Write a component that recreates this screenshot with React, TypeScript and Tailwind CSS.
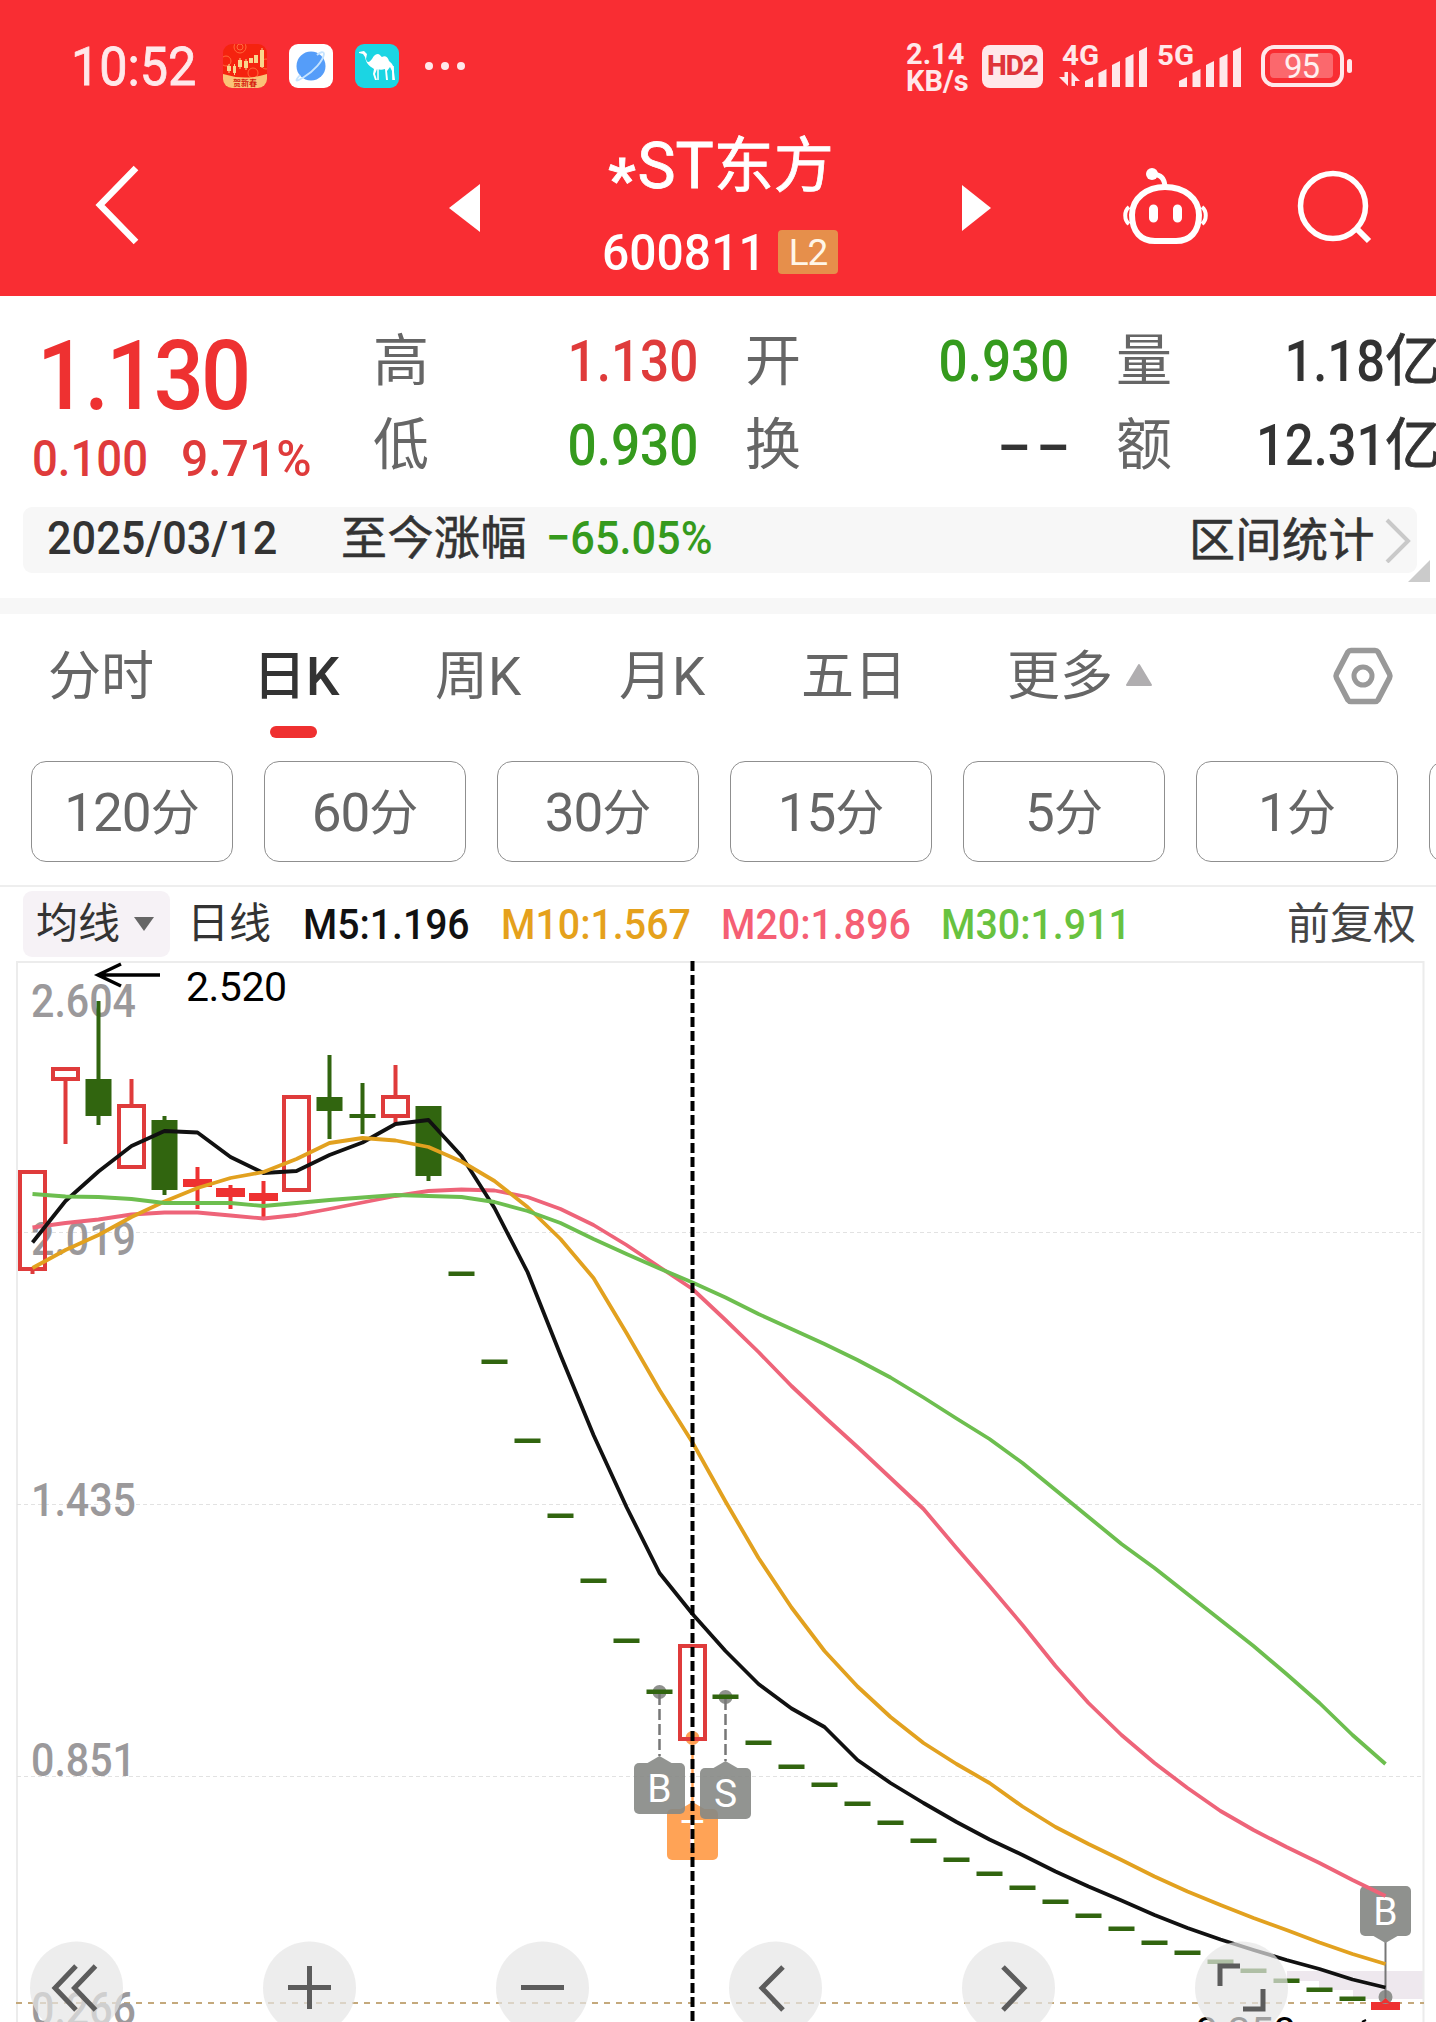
import type { ReactNode } from 'react';

type Candle = {
  kind: 'hollow' | 'red' | 'green';
  top: number;
  bottom: number;
  high?: number;
  low?: number;
};

const STEP = 33;
const FIRST_X = 32.5;
const cx = (i: number) => FIRST_X + i * STEP;

const CANDLES: Candle[] = [
  { kind: 'hollow', top: 1170, bottom: 1271, low: 1274 },
  { kind: 'hollow', top: 1067, bottom: 1081, low: 1144 },
  { kind: 'green', top: 1079, bottom: 1116, high: 1001, low: 1125 },
  { kind: 'hollow', top: 1104, bottom: 1169, high: 1079 },
  { kind: 'green', top: 1120, bottom: 1190, high: 1116, low: 1195 },
  { kind: 'red', top: 1179, bottom: 1187, high: 1167, low: 1209 },
  { kind: 'red', top: 1188, bottom: 1197, high: 1185, low: 1209 },
  { kind: 'red', top: 1193, bottom: 1201, high: 1181, low: 1217 },
  { kind: 'hollow', top: 1095, bottom: 1192 },
  { kind: 'green', top: 1097, bottom: 1111, high: 1055, low: 1139 },
  { kind: 'green', top: 1114, bottom: 1118, high: 1083, low: 1134 },
  { kind: 'hollow', top: 1095, bottom: 1118, high: 1065, low: 1123 },
  { kind: 'green', top: 1106, bottom: 1176, low: 1181 },
  ...[1274, 1362, 1441, 1516, 1581, 1641, 1692].map(flat),
  { kind: 'hollow', top: 1644, bottom: 1741 },
  ...[
    1697, 1743, 1767, 1785, 1804, 1823, 1841, 1860, 1874, 1888, 1902, 1916, 1929, 1943, 1953, 1962,
    1971, 1981, 1990, 1999,
  ].map(flat),
  { kind: 'red', top: 2002, bottom: 2010, high: 1999 },
];

// limit-down day: open, high, low and close are all the same
function flat(y: number): Candle {
  return { kind: 'green', top: y - 2.5, bottom: y + 2 };
}

const AVERAGES = [
  {
    color: '#ee6479',
    values: [
      1227.5, 1223, 1219.5, 1214.5, 1212.5, 1212.5, 1215.5, 1218.5, 1215, 1209, 1202.5, 1196, 1191,
      1189.5, 1190.5, 1197, 1209, 1225, 1245, 1267, 1289, 1320, 1352, 1386, 1417, 1447, 1478, 1509,
      1548, 1586, 1625, 1666, 1703, 1735, 1763, 1788, 1811, 1830, 1847, 1863, 1880, 1896,
    ],
  },
  {
    color: '#111111',
    values: [
      1242.5, 1201, 1171.5, 1146, 1131, 1132.5, 1157, 1173, 1171, 1155, 1142.5, 1124, 1120, 1156,
      1208, 1272, 1355, 1435, 1507, 1573, 1614, 1651, 1684, 1708.5, 1727, 1760, 1783, 1803, 1822,
      1839.5, 1855, 1871.5, 1886.5, 1900.5, 1915, 1928, 1939.5, 1950, 1960, 1969, 1979.5, 1987.5,
    ],
  },
  {
    color: '#e2a11f',
    values: [
      1268, 1250, 1235, 1217, 1201.5, 1188, 1178, 1172, 1159, 1143, 1138, 1140.5, 1147, 1161.5,
      1181, 1207, 1239, 1278, 1333, 1390, 1442.5, 1501.5, 1558, 1607.5, 1651, 1686.5, 1717, 1743,
      1764, 1783, 1806.5, 1827, 1844, 1860, 1876.5, 1891.5, 1905, 1918, 1930, 1942.5, 1954, 1964,
    ],
  },
  {
    color: '#6dbe4f',
    values: [
      1194, 1196.5, 1197, 1199, 1203, 1203, 1203, 1206, 1203, 1200, 1197.5, 1195, 1196, 1197, 1202,
      1211, 1223, 1239, 1254, 1268.5, 1282.5, 1297.5, 1314, 1329, 1344, 1360, 1377.5, 1397.5, 1418.5,
      1439, 1463, 1490, 1517, 1544, 1568, 1594, 1620, 1646, 1674, 1703, 1735, 1764,
    ],
  },
];

const TABS = [
  { label: '分时', width: 'w-[205px]' },
  { label: '日K', width: 'w-[182px]', active: true },
  { label: '周K', width: 'w-[184px]' },
  { label: '月K', width: 'w-[182px]' },
  { label: '五日', width: 'w-[206px]' },
];

const PERIODS = ['120', '60', '30', '15', '5', '1', ''];

function StatusBar() {
  return (
    <div className="flex h-[132px] items-center pl-[71px] text-[#ffe8ea]">
      <span className="mt-[3px] w-[152px] origin-left scale-x-[0.95] text-[53px] leading-none [-webkit-text-stroke:0.8px]">
        10:52
      </span>
      <svg width="180" height="44" viewBox="0 0 180 44" className="mr-[22px]">
        <clipPath id="app">
          <rect width="44" height="44" rx="9" />
        </clipPath>
        <g clipPath="url(#app)">
          <rect width="44" height="44" fill="#f5230f" />
          <g fill="none" stroke="#ff6a3c" strokeWidth="1">
            <circle cx="17" cy="3" r="6" />
            <circle cx="17" cy="3" r="3" />
            <circle cx="3" cy="17" r="5" />
            <circle cx="30" cy="29" r="5" />
            <circle cx="43" cy="20" r="5" />
          </g>
          <path d="M0 30Q22 37 44 30V44H0Z" fill="#fbc277" />
          <g fill="#f9d58c">
            <path d="M4 22h4v5H4zM10 22h3v7h-3zM15 16h4v7h-4zM21 17h4v7h-4zM26 14h4v5h-4zM31 11h4v8h-4zM37 6h4v17h-4z" />
            <path d="M6 20v9M11.500 20v11M17 14v11M23 15v11M39 4v20" stroke="#f9d58c" />
          </g>
          <text x="22" y="42" fontSize="8" fontWeight="700" textAnchor="middle" fill="#d51c10">
            贺新春
          </text>
        </g>
        <rect x="66" width="44" height="44" rx="9" fill="#fff" />
        <circle cx="88" cy="22" r="14.500" fill="#559df9" />
        <path
          d="M77 31C71 38 73 38 81 33C91 27 100 17 101 10C101 7 97 8 94 11"
          fill="none"
          stroke="#c5e3ff"
          strokeWidth="1.800"
        />
        <rect x="132" width="44" height="44" rx="9" fill="#1bd5e3" />
        <path
          d="M136 8l5-1 3 3-1 5c1 4 3 4 6 0 2-4 4-5 6-5 2 0 3 3 4 3 3-2 6 0 7 4 4 3 5 6 5 11l1 8h-2l-1-9-2-4-3 4 1 9h-2l-1-11c-3 1-5 1-8 0l-2 5 2 6h-2l-2-6 1-5c-5-3-8-6-9-12l-2-3-4-1z"
          fill="#fff"
        />
        <path d="M155 23v13M170 22v14" stroke="#fff" strokeWidth="1.500" />
      </svg>
      <div className="flex gap-[8px]">
        <i className="size-[8px] rounded-full bg-[#ffe8ea]" />
        <i className="size-[8px] rounded-full bg-[#ffe8ea]" />
        <i className="size-[8px] rounded-full bg-[#ffe8ea]" />
      </div>
      <div className="ml-[441px] w-[76px] pt-[4px] text-[29px] leading-[27px] font-bold">
        <div>2.14</div>
        <div>KB/s</div>
      </div>
      <div className="flex h-[43px] w-[61px] items-center justify-center rounded-[8px] bg-[#ffe8ea] text-[28px] font-extrabold tracking-[-1px] text-[#e0343a]">
        HD2
      </div>
      <Signal label="4G" arrows />
      <Signal label="5G" />
      <svg width="96" height="42" viewBox="0 0 96 42" className="ml-[19px]">
        <rect x="2" y="2" width="79" height="38" rx="11" fill="none" stroke="#ffe8ea" strokeWidth="4" />
        <rect x="9" y="8" width="63" height="25" rx="4" fill="#fb686d" />
        <rect x="86" y="14" width="5" height="14" rx="2.500" fill="#ffe8ea" />
        <text x="41" y="33" fontSize="33" textAnchor="middle" textLength="36" fill="#fff0f0">
          95
        </text>
      </svg>
    </div>
  );
}

function Signal({ label, arrows }: { label: string; arrows?: boolean }) {
  return (
    <svg
      width={arrows ? 91 : 85}
      height="44"
      viewBox={arrows ? '0 0 91 44' : '0 0 85 44'}
      className={`overflow-visible ${arrows ? 'ml-[17px]' : 'ml-[6px]'}`}
      fill="#ffe8ea"
    >
      <text x={arrows ? 2 : 0} y="21" fontSize="28" fontWeight="700" textLength="37" lengthAdjust="spacingAndGlyphs">
        {label}
      </text>
      <g transform={arrows ? 'translate(25 0)' : 'translate(22 0)'}>
        {[33, 25, 17, 10, 3].map((y, i) => (
          <path key={y} d={`M${i * 13.5} ${y + 4}L${i * 13.5 + 8} ${y}V43H${i * 13.5}Z`} />
        ))}
      </g>
      {arrows && (
        <>
          <path d="M4.500 28H8V42L-1 33H4.500Z" />
          <path d="M11.500 42H15V37L20 37L11.500 28Z" />
        </>
      )}
    </svg>
  );
}

function TitleBar() {
  return (
    <div className="flex h-[164px] pl-[92px] text-white">
      <svg width="50" height="84" viewBox="0 0 50 84" className="mt-[31px]">
        <path d="M44 5L8 42L44 79" fill="none" stroke="#fff" strokeWidth="6.500" />
      </svg>
      <svg width="31" height="48" viewBox="0 0 31 48" className="mt-[52px] ml-[307px]">
        <path d="M0 24L31 0V48Z" fill="#fff" />
      </svg>
      <div className="ml-[81px] w-[320px] text-center">
        <div className="mt-[4px] flex h-[62px] items-center justify-center text-[60px] leading-none [-webkit-text-stroke:0.8px]">
          <span className="text-[64px]">
            <span className="relative top-[12px] mr-[2px] text-[60px] font-bold">*</span>ST
          </span>
          <span>东方</span>
        </div>
        <div className="mt-[32px] ml-[41px] flex h-[44px] items-center">
          <span className="mt-[2px] w-[176px] origin-left scale-x-[0.96] text-left text-[50px] leading-none font-medium">
            600811
          </span>
          <span className="flex h-[44px] w-[60px] items-center justify-center rounded-[4px] bg-[#e68f4b] text-[37px] leading-none tracking-[-1px] text-[#fff6e8]">
            L2
          </span>
        </div>
      </div>
      <svg width="29" height="46" viewBox="0 0 29 46" className="mt-[53px] ml-[81px]">
        <path d="M0 0L29 23L0 46Z" fill="#fff" />
      </svg>
      <svg width="88" height="80" viewBox="0 0 88 80" className="mt-[35px] ml-[129px]" fill="none" stroke="#fff">
        <circle cx="32" cy="7" r="6" fill="#fff" stroke="none" />
        <path d="M33 7C41 8 44 11 45 19" strokeWidth="5" />
        <path d="M45 20C64 20 79 31 79 48C79 65 70 74 56 74H35C21 74 12 65 12 48C12 31 27 20 45 20Z" strokeWidth="6" />
        <path d="M9 40C4 44 4 53 9 57M82 40C87 44 87 53 82 57" strokeWidth="4" />
        <path d="M33.500 42V51M57.500 42V51" strokeWidth="9" strokeLinecap="round" />
      </svg>
      <svg width="80" height="80" viewBox="0 0 80 80" className="mt-[38px] ml-[87px]" fill="none" stroke="#fff">
        <circle cx="38" cy="36" r="32.500" strokeWidth="5.500" />
        <path d="M61 58L74 71" strokeWidth="6" />
      </svg>
    </div>
  );
}

function Stat({ label, children, className }: { label: string; children: ReactNode; className: string }) {
  return (
    <div className={`flex h-[84px] items-center justify-between text-[57px] leading-none font-medium ${className}`}>
      <span className="text-[56px] font-normal text-[#666]">{label}</span>
      {children}
    </div>
  );
}

function Quote() {
  return (
    <div className="flex h-[211px] pt-[23px]">
      <div className="w-[373px] shrink-0 font-medium text-[#ee3131]">
        <div className="mt-[8px] ml-[37px] origin-left scale-x-[0.91] text-[97px] leading-[98px] tracking-[-3px]">1.130</div>
        <div className="mt-[8px] ml-[32px] flex text-[50px] leading-[52px] text-[#df3b3b]">
          <span className="w-[149px] origin-left scale-x-[0.91]">0.100</span>
          <span className="w-[150px] origin-left scale-x-[0.96]">9.71%</span>
        </div>
      </div>
      <div className="w-[325px] shrink-0">
        <Stat label="高" className="text-[#df3b3b]">
          <span className="origin-right scale-x-[0.9]">1.130</span>
        </Stat>
        <Stat label="低" className="text-[#359a1d]">
          <span className="origin-right scale-x-[0.9]">0.930</span>
        </Stat>
      </div>
      <div className="ml-[47px] w-[324px] shrink-0">
        <Stat label="开" className="text-[#359a1d]">
          <span className="origin-right scale-x-[0.9]">0.930</span>
        </Stat>
        <Stat label="换" className="text-[#333]">
          <span className="-mr-[7px] origin-right scale-x-[1.750] tracking-[3px]">--</span>
        </Stat>
      </div>
      <div className="ml-[47px] w-[325px] shrink-0">
        <Stat label="量" className="text-[#333]">
          <span className="flex">
            <span className="origin-right scale-x-[0.89]">1.18</span>
            <span className="text-[56px] font-normal [-webkit-text-stroke:0.8px]">亿</span>
          </span>
        </Stat>
        <Stat label="额" className="text-[#333]">
          <span className="flex">
            <span className="origin-right scale-x-[0.89]">12.31</span>
            <span className="text-[56px] font-normal [-webkit-text-stroke:0.8px]">亿</span>
          </span>
        </Stat>
      </div>
    </div>
  );
}

function RangeBar() {
  return (
    <div className="relative flex h-[107px] border-b-[16px] border-[#f7f7f7] px-[23px]">
      <div className="flex h-[66px] w-[1394px] shrink-0 items-center rounded-[9px] bg-[#f7f7f7] pl-[24px] text-[46px] leading-none font-medium text-[#333]">
        <span className="-mt-[5px] w-[294px] origin-left scale-x-[0.92] text-[47px]">2025/03/12</span>
        <span className="-mt-[5px] w-[205px] font-normal tracking-[0.500px] [-webkit-text-stroke:0.6px]">至今涨幅</span>
        <span className="-mt-[5px] origin-left scale-x-[0.92] text-[47px] text-[#359a1d]">−65.05%</span>
        <span className="ml-auto font-normal tracking-[0.500px] [-webkit-text-stroke:0.6px]">区间统计</span>
        <svg width="46" height="46" viewBox="0 0 46 46" className="-ml-[4px]">
          <path d="M16 3L37 24L16 45" fill="none" stroke="#c9c9c9" strokeWidth="4" />
        </svg>
      </div>
      <svg width="22" height="22" viewBox="0 0 22 22" className="absolute top-[53px] left-[1408px]">
        <path d="M22 0V22H0Z" fill="#cbcbcb" />
      </svg>
    </div>
  );
}

function Tabs() {
  return (
    <div className="flex h-[147px] pl-[48px] text-[53px] leading-none text-[#666]">
      {TABS.map((tab) => (
        <div key={tab.label} className={`shrink-0 pt-[37px] ${tab.width}`}>
          <span className={tab.active ? 'font-medium text-[#333]' : ''}>{tab.label}</span>
          {tab.active && <div className="mt-[22px] ml-[17px] h-[12px] w-[47px] rounded-[6px] bg-[#ef3030]" />}
        </div>
      ))}
      <div className="flex w-[325px] shrink-0 pt-[37px]">
        更多
        <svg width="28" height="24" viewBox="0 0 28 24" className="mt-[12px] ml-[12px]">
          <path d="M14 2L26 22H2Z" fill="#b0aeb0" stroke="#b0aeb0" strokeWidth="2" strokeLinejoin="round" />
        </svg>
      </div>
      <svg width="62" height="60" viewBox="0 0 62 60" className="mt-[32px] shrink-0" fill="none" stroke="#999">
        <path d="M19 4.500H43Q45 4.500 46 6L57.500 28Q58.500 30 57.500 32L46 54Q45 55.500 43 55.500H19Q17 55.500 16 54L4.500 32Q3.500 30 4.500 28L16 6Q17 4.500 19 4.500Z" strokeWidth="5.500" />
        <circle cx="31" cy="30" r="9" strokeWidth="5" />
      </svg>
    </div>
  );
}

function Periods() {
  return (
    <div className="flex h-[126px] gap-[31px] overflow-hidden border-b-2 border-[#eee] pl-[31px]">
      {PERIODS.map((p) => (
        <div
          key={p}
          className="flex h-[101px] w-[202px] shrink-0 items-center justify-center rounded-[15px] border-[1.500px] border-[#8f8f8f] pt-[3px] text-[53px] leading-none text-[#666]"
        >
          {p && (
            <>
              <span className="tracking-[-1px]">{p}</span>
              <span className="text-[49px]">分</span>
            </>
          )}
        </div>
      ))}
    </div>
  );
}

function Legend() {
  return (
    <div className="flex h-[74px] items-center pl-[23px] text-[43px] leading-none font-medium text-[#333]">
      <div className="flex h-[66px] w-[147px] items-center rounded-[9px] bg-[#f6f2f6] pl-[13px] font-normal">
        <span className="text-[42px]">均线</span>
        <svg width="24" height="16" viewBox="0 0 24 16" className="ml-[12px]">
          <path d="M2 1H22L12 15Z" fill="#666" />
        </svg>
      </div>
      <span className="ml-[17px] w-[116px] text-[42px] font-normal">日线</span>
      <span className="w-[198px] origin-left scale-x-[0.91] text-[#111]">M5:1.196</span>
      <span className="w-[220px] origin-left scale-x-[0.915] text-[#e5a11c]">M10:1.567</span>
      <span className="w-[220px] origin-left scale-x-[0.915] text-[#f55f74]">M20:1.896</span>
      <span className="origin-left scale-x-[0.915] text-[#68c23f]">M30:1.911</span>
      <span className="mr-[20px] ml-auto text-[43px] font-normal text-[#444]">前复权</span>
    </div>
  );
}

function CandleShape({ candle, x }: { candle: Candle; x: number }) {
  const { kind, top, bottom, high, low } = candle;
  const color = kind === 'green' ? '#31650f' : kind === 'red' ? '#ee3131' : '#df3b3b';
  return (
    <g>
      {high && <rect x={x - 2} y={high} width="4" height={top - high} fill={color} />}
      {low && <rect x={x - 2} y={bottom} width="4" height={low - bottom} fill={color} />}
      {kind === 'hollow' ? (
        <rect x={x - 12.5} y={top + 2} width="25" height={bottom - top - 4} fill="none" stroke={color} strokeWidth="4" />
      ) : (
        <rect
          x={kind === 'red' ? x - 14.5 : x - 13}
          y={top}
          width={kind === 'red' ? 29 : 26}
          height={bottom - top}
          fill={color}
        />
      )}
    </g>
  );
}

function Marker({ x, y, letter, color }: { x: number; y: number; letter: string; color: string }) {
  return (
    <g>
      <path d={`M${x - 12} ${y}L${x} ${y - 7}L${x + 12} ${y}Z`} fill={color} />
      <rect x={x - 25.5} y={y} width="51" height="51" rx="5" fill={color} />
      <text x={x} y={y + 39} fontSize="39" textAnchor="middle" fill="#fff">
        {letter}
      </text>
    </g>
  );
}

function RoundButton({ x, d }: { x: number; d: string }) {
  return (
    <g>
      <circle cx={x} cy="1988" r="46.500" fill="#e6e6e6" fillOpacity="0.7" />
      <path d={d} fill="none" stroke="#5c5c5c" strokeWidth="5" />
    </g>
  );
}

function Chart() {
  return (
    <svg width="1436" height="1061" viewBox="0 961 1436 1061" className="block">
      <g fill="#eee8ee">
        <rect x="1287" y="1971" width="137" height="10" />
        <rect x="1319" y="1981" width="105" height="9" />
        <rect x="1353" y="1990" width="71" height="9" />
      </g>
      <path d="M17 2022V962H1423.500V2022" fill="none" stroke="#ececec" strokeWidth="2" />
      <path
        d="M17 1232.500H1423M17 1504.500H1423M17 1776.500H1423"
        stroke="#e2e2e2"
        strokeWidth="1"
        strokeDasharray="4 3"
      />
      <path d="M16 2003H1424" stroke="#c4a97c" strokeWidth="2" strokeDasharray="6 6" />

      <g fontSize="46" fontWeight="500" fill="#9b999b">
        <text x="31" y="1017" textLength="105" lengthAdjust="spacingAndGlyphs">2.604</text>
        <text x="31" y="1254.500" textLength="105" lengthAdjust="spacingAndGlyphs">2.019</text>
        <text x="31" y="1516" textLength="105" lengthAdjust="spacingAndGlyphs">1.435</text>
        <text x="31" y="1776" textLength="105" lengthAdjust="spacingAndGlyphs">0.851</text>
        <text x="31" y="2025" textLength="105" lengthAdjust="spacingAndGlyphs">0.266</text>
      </g>

      <g fill="#8f918e">
        <circle cx={cx(19)} cy="1692" r="7" />
        <circle cx={cx(21)} cy="1697" r="7" />
        <circle cx={cx(20)} cy="1738" r="7" fill="#ff9f52" />
      </g>
      {CANDLES.map((c, i) => (
        <CandleShape key={i} candle={c} x={cx(i)} />
      ))}
      <circle cx={cx(41)} cy="1997" r="7" fill="#8f918e" />
      <path d={`M${cx(41)} 1940V1998`} stroke="#777" strokeWidth="2" />
      <path d={`M${cx(41) - 5} 2003L${cx(41)} 1998L${cx(41) + 5} 2003Z`} fill="#ee3131" />
      <path d="M1373.500 1936H1397.500L1385.500 1943Z" fill="#8f918e" />
      <rect x="1360" y="1886" width="51" height="50" rx="5" fill="#8f918e" />
      <text x="1385.500" y="1925" fontSize="39" textAnchor="middle" fill="#fff">B</text>

      {AVERAGES.map((line) => (
        <polyline
          key={line.color}
          points={line.values.map((y, i) => `${cx(i)},${y}`).join(' ')}
          fill="none"
          stroke={line.color}
          strokeWidth="3.800"
          strokeLinejoin="round"
        />
      ))}

      <path d="M160 975H100M121 964L98 975L121 986" fill="none" stroke="#000" strokeWidth="3.500" />
      <g fontSize="41" fill="#000">
        <text x="186" y="1001" textLength="101">2.520</text>
        <text x="1195" y="2046" textLength="101">0.350</text>
        <path d="M1362 2022L1366 2020" stroke="#000" strokeWidth="2" />
      </g>

      <path
        d={`M${cx(19)} 1694V1756M${cx(21)} 1699V1761`}
        stroke="#777"
        strokeWidth="2.500"
        strokeDasharray="11 4"
      />
      <path d={`M${cx(20)} 1741V1803`} stroke="#ff9f52" strokeWidth="2.500" />
      <Marker x={cx(20)} y={1809} letter="T" color="#ffa356" />
      <path d={`M${cx(20)} 961V2022`} stroke="#000" strokeWidth="4" strokeDasharray="10 4" />
      <Marker x={cx(19)} y={1763} letter="B" color="rgba(134,136,133,0.9)" />
      <Marker x={cx(21)} y={1768} letter="S" color="rgba(134,136,133,0.9)" />

      <RoundButton x={76.5} d="M76 1966L55 1988L76 2010M95.500 1966L74.500 1988L95.500 2010" />
      <RoundButton x={309.5} d="M288 1987.500H331M309.500 1966V2009" />
      <RoundButton x={542.5} d="M521 1987.500H564" />
      <RoundButton x={775.5} d="M783 1967L762 1988L783 2010" />
      <RoundButton x={1008.5} d="M1003 1967L1024 1988L1003 2010" />
      <RoundButton x={1241.5} d="M1220 1986V1966H1240M1263 1989V2009H1243" />
    </svg>
  );
}

export default function App() {
  return (
    <div className="h-[2022px] w-[1436px] overflow-hidden bg-white font-[Roboto,'Noto_Sans_CJK_SC',sans-serif]">
      <header className="h-[296px] bg-[#f92d33]">
        <StatusBar />
        <TitleBar />
      </header>
      <Quote />
      <RangeBar />
      <Tabs />
      <Periods />
      <Legend />
      <Chart />
    </div>
  );
}
